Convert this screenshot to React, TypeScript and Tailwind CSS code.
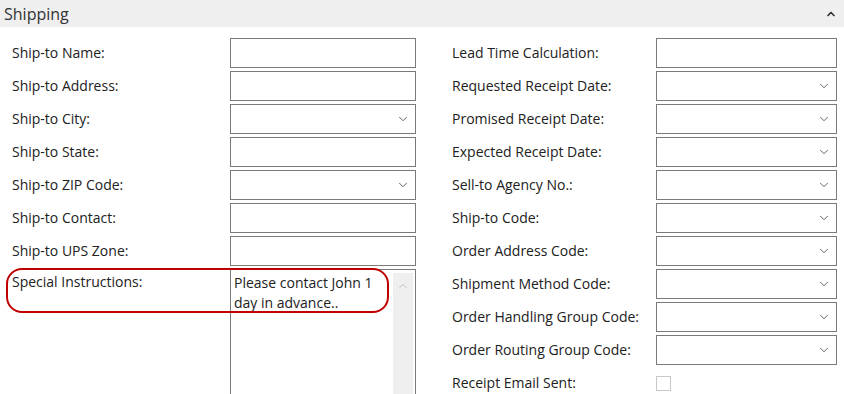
import React from 'react';
import { ChevronDown, ChevronUp } from 'lucide-react';

type Field = { label: string; kind: 'text' | 'select' | 'check' };

const leftFields: Field[] = [
  { label: 'Ship-to Name:', kind: 'text' },
  { label: 'Ship-to Address:', kind: 'text' },
  { label: 'Ship-to City:', kind: 'select' },
  { label: 'Ship-to State:', kind: 'text' },
  { label: 'Ship-to ZIP Code:', kind: 'select' },
  { label: 'Ship-to Contact:', kind: 'text' },
  { label: 'Ship-to UPS Zone:', kind: 'text' },
];

const rightFields: Field[] = [
  { label: 'Lead Time Calculation:', kind: 'text' },
  { label: 'Requested Receipt Date:', kind: 'select' },
  { label: 'Promised Receipt Date:', kind: 'select' },
  { label: 'Expected Receipt Date:', kind: 'select' },
  { label: 'Sell-to Agency No.:', kind: 'select' },
  { label: 'Ship-to Code:', kind: 'select' },
  { label: 'Order Address Code:', kind: 'select' },
  { label: 'Shipment Method Code:', kind: 'select' },
  { label: 'Order Handling Group Code:', kind: 'select' },
  { label: 'Order Routing Group Code:', kind: 'select' },
  { label: 'Receipt Email Sent:', kind: 'check' },
];

function Control({ kind }: { kind: Field['kind'] }) {
  if (kind === 'check') {
    return <div className="w-[15px] h-[15px] border border-[#c8c8c8] bg-white" />;
  }
  return (
    <div className="h-[30px] w-full border border-[#7a7a7a] bg-white flex items-center justify-end pr-[5px]">
      {kind === 'select' && <ChevronDown size={14} strokeWidth={1.3} className="text-[#333]" />}
    </div>
  );
}

function Row({ field, labelWidth }: { field: Field; labelWidth: string }) {
  return (
    <div className="flex items-center h-[30px] mb-[3px]">
      <div className={`${labelWidth} shrink-0 text-[14px] leading-[20px] pb-[1px] text-[#212121]`}>{field.label}</div>
      <div className="flex-1 flex items-center">
        <Control kind={field.kind} />
      </div>
    </div>
  );
}

export default function App() {
  return (
    <div
      className="w-[844px] h-[394px] overflow-hidden bg-white"
      style={{ fontFamily: '"Segoe UI", "Open Sans", sans-serif' }}
    >
      {/* Section header */}
      <div className="h-[27px] bg-[#efefef] flex items-center justify-between pl-[4px] pr-[7px]">
        <span className="text-[16px] text-[#333]">Shipping</span>
        <ChevronUp size={12} strokeWidth={3.5} className="text-[#333]" />
      </div>

      <div className="flex pt-[11px]">
        {/* Left column */}
        <div className="w-[416px] pl-[12px] shrink-0">
          {leftFields.map((f) => (
            <Row key={f.label} field={f} labelWidth="w-[218px]" />
          ))}
          <div className="relative flex">
            <div className="w-[218px] shrink-0 text-[14px] leading-[20px] pt-[3px] text-[#212121]">
              Special Instructions:
            </div>
            <div className="flex-1 h-[140px] border border-[#7a7a7a] border-b-0 flex">
              <div className="flex-1 pl-[3px] pt-[3px] text-[14px] leading-[20px] text-[#212121]">
                Please contact John 1 day in advance..
              </div>
              <div className="w-[20px] mt-[3px] mr-[2px] bg-[#efefef] flex justify-center pt-[6px]">
                <ChevronUp size={14} strokeWidth={1.5} className="text-[#bdbdbd]" />
              </div>
            </div>
            {/* annotation */}
            <div className="absolute left-[-6px] top-[-1px] w-[383px] h-[45px] rounded-[16px] border-2 border-[#c00000]" />
          </div>
        </div>

        {/* Right column */}
        <div className="w-[385px] ml-[36px] shrink-0">
          {rightFields.map((f) => (
            <Row key={f.label} field={f} labelWidth="w-[204px]" />
          ))}
        </div>
      </div>
    </div>
  );
}
